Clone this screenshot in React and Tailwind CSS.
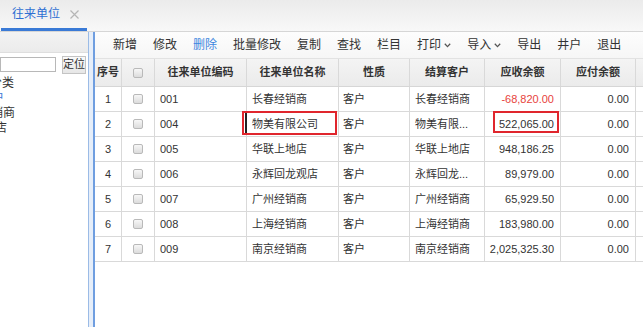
import React from "react";

const cols = [27, 33, 92, 92, 71, 75, 76, 75];

const rows = [
  { n: "1", code: "001", name: "长春经销商", type: "客户", settle: "长春经销商", ar: "-68,820.00", ap: "0.00", red: true },
  { n: "2", code: "004", name: "物美有限公司", type: "客户", settle: "物美有限...", ar: "522,065.00", ap: "0.00" },
  { n: "3", code: "005", name: "华联上地店", type: "客户", settle: "华联上地店", ar: "948,186.25", ap: "0.00" },
  { n: "4", code: "006", name: "永辉回龙观店", type: "客户", settle: "永辉回龙...", ar: "89,979.00", ap: "0.00" },
  { n: "5", code: "007", name: "广州经销商", type: "客户", settle: "广州经销商", ar: "65,929.50", ap: "0.00" },
  { n: "6", code: "008", name: "上海经销商", type: "客户", settle: "上海经销商", ar: "183,980.00", ap: "0.00" },
  { n: "7", code: "009", name: "南京经销商", type: "客户", settle: "南京经销商", ar: "2,025,325.30", ap: "0.00" },
];

function Chevron() {
  return (
    <svg width="7" height="5" viewBox="0 0 7 5" className="ml-[3px] mt-[1px]">
      <path d="M0.8 0.8 L3.5 3.6 L6.2 0.8" fill="none" stroke="#555" strokeWidth="1.3" />
    </svg>
  );
}

function Checkbox() {
  return (
    <div className="w-[10px] h-[10px] rounded-[2px] border border-[#b9b9b9] bg-gradient-to-b from-[#f7f7f7] to-[#dcdcdc]" />
  );
}

function Cell({ w, children, className = "" }) {
  return (
    <div
      className={`h-full shrink-0 border-r border-[#d9d9d9] flex items-center ${className}`}
      style={{ width: w }}
    >
      {children}
    </div>
  );
}

export default function App() {
  const tools = [
    { t: "新增" },
    { t: "修改" },
    { t: "删除", blue: true },
    { t: "批量修改" },
    { t: "复制" },
    { t: "查找" },
    { t: "栏目" },
    { t: "打印", chev: true },
    { t: "导入", chev: true },
    { t: "导出" },
    { t: "井户" },
    { t: "退出" },
  ];

  return (
    <div className="w-[643px] h-[327px] overflow-hidden bg-white flex flex-col font-['Liberation_Sans','Noto_Sans_CJK_SC',sans-serif] text-[#333]">
      {/* tab bar */}
      <div className="h-[32px] shrink-0 border-b border-[#d6d6d6] bg-gradient-to-b from-[#ebebeb] to-[#f8f8f8] flex items-end">
        <div className="ml-[1px] w-[86px] h-[30px] border-b-[3px] border-[#3a7ad6] flex items-center pl-[11px] pb-[1px]">
          <span className="text-[12px] text-[#2e6fd3] leading-none">往来单位</span>
          <svg width="9" height="9" viewBox="0 0 9 9" className="ml-[10px]">
            <path d="M0.5 0.5 L8.5 8.5 M8.5 0.5 L0.5 8.5" stroke="#b5b5b5" strokeWidth="1.2" />
          </svg>
        </div>
      </div>

      <div className="flex flex-1 min-h-0">
        {/* left panel */}
        <div className="w-[88px] shrink-0 flex flex-col overflow-hidden">
          <div className="h-[21px] shrink-0 bg-gradient-to-b from-[#f3f3f3] to-[#ebebeb] border-b border-[#dedede]" />
          <div className="h-[23px] shrink-0 flex items-center">
            <div className="w-[56px] h-[15px] border border-[#b8b8b8] bg-white" />
            <div className="ml-[6px] w-[24px] h-[18px] border border-[#c4c4c4] bg-gradient-to-b from-[#fafafa] to-[#e6e6e6] flex items-center justify-center text-[11px] leading-none text-[#333]">
              定位
            </div>
          </div>
          <div className="flex flex-col text-[12px] leading-[15px] whitespace-nowrap">
            <div className="ml-[-34px]">往来分类</div>
            <div className="ml-[-20px] text-[#3a7ad6]">客户</div>
            <div className="ml-[-21px]">经销商</div>
            <div className="ml-[-17px]">门店</div>
          </div>
        </div>

        {/* splitter */}
        <div className="w-[7px] shrink-0 border-l border-[#9bbbe6] border-r-[2px] border-r-[#6f9ee0] bg-[#e6eef9]" />

        {/* right panel */}
        <div className="flex-1 min-w-0 flex flex-col relative">
          <div className="h-[27px] shrink-0 flex items-center pl-[10px] bg-gradient-to-b from-[#fdfdfd] to-[#f6f6f6] border-b border-[#e2e2e2]">
            {tools.map((b) => (
              <div
                key={b.t}
                className={`px-[8px] flex items-center text-[12px] leading-none whitespace-nowrap ${b.blue ? "text-[#3d86e0]" : "text-[#333]"}`}
              >
                {b.t}
                {b.chev && <Chevron />}
              </div>
            ))}
          </div>

          {/* header */}
          <div className="h-[28px] shrink-0 flex bg-gradient-to-b from-[#f4f4f4] to-[#ebebeb] border-b border-[#d6d6d6] text-[11px] font-bold">
            <Cell w={cols[0]} className="justify-center">序号</Cell>
            <Cell w={cols[1]} className="justify-center"><Checkbox /></Cell>
            <Cell w={cols[2]} className="justify-center">往来单位编码</Cell>
            <Cell w={cols[3]} className="justify-center">往来单位名称</Cell>
            <Cell w={cols[4]} className="justify-center">性质</Cell>
            <Cell w={cols[5]} className="justify-center">结算客户</Cell>
            <Cell w={cols[6]} className="justify-center">应收余额</Cell>
            <Cell w={cols[7]} className="justify-center">应付余额</Cell>
            <div className="flex-1" />
          </div>

          {rows.map((r) => (
            <div key={r.n} className="h-[25px] shrink-0 flex border-b border-[#d9d9d9] text-[11px]">
              <Cell w={cols[0]} className="justify-center">{r.n}</Cell>
              <Cell w={cols[1]} className="justify-center"><Checkbox /></Cell>
              <Cell w={cols[2]} className="pl-[5px]">{r.code}</Cell>
              <Cell w={cols[3]} className="pl-[5px]">{r.name}</Cell>
              <Cell w={cols[4]} className="pl-[4px]">{r.type}</Cell>
              <Cell w={cols[5]} className="pl-[5px] whitespace-nowrap">{r.settle}</Cell>
              <Cell w={cols[6]} className={`justify-end pr-[6px] ${r.red ? "text-[#e8433c]" : ""}`}>{r.ar}</Cell>
              <Cell w={cols[7]} className="justify-end pr-[6px]">{r.ap}</Cell>
              <div className="flex-1" />
            </div>
          ))}

          {/* annotation boxes */}
          <div className="absolute left-[147px] top-[79px] w-[95px] h-[24px] border-2 border-[#e0262d] pointer-events-none">
            <div className="absolute left-[1px] top-0 bottom-0 w-[1.5px] bg-[#222]" />
          </div>
          <div className="absolute left-[398px] top-[79px] w-[66px] h-[22px] border-2 border-[#e0262d] pointer-events-none" />
        </div>
      </div>
    </div>
  );
}
